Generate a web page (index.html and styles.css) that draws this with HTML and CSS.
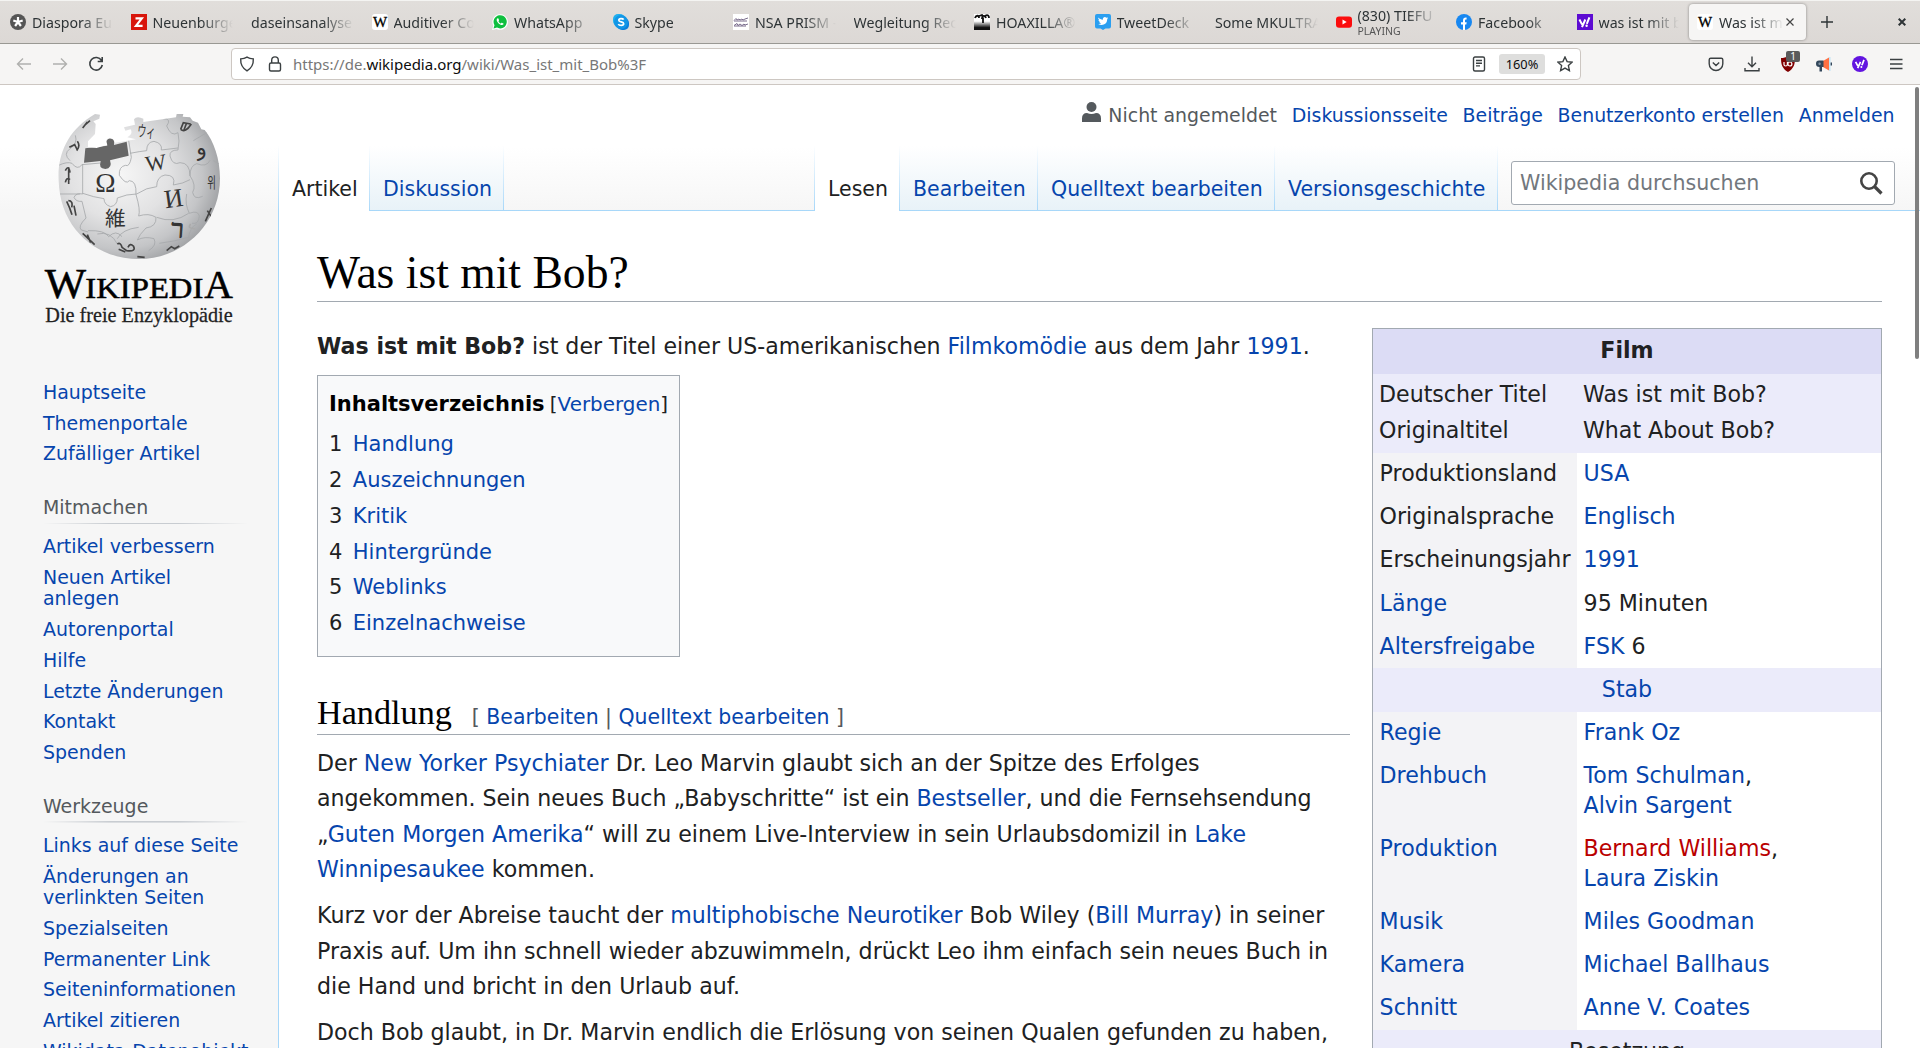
FILE: index.html
```html
<!DOCTYPE html>
<html lang="de">
<head>
<meta charset="utf-8">
<title>Was ist mit Bob? – Wikipedia</title>
<link rel="stylesheet" href="styles.css">
</head>
<body>
<div class="tabbar">
  <div class="tab"><svg class="fav" viewBox="0 0 16 16"><circle cx="8" cy="8" r="8" fill="#555"/><path d="M8 8V3M8 8L3.300 6.500M8 8l4.700-1.500M8 8l-2.900 4M8 8l2.900 4" stroke="#fff" stroke-width="2.200"/></svg><span class="label">Diaspora Eu</span></div>
  <div class="tab"><svg class="fav" viewBox="0 0 16 16"><rect width="16" height="16" fill="#d8150b"/><path d="M4.500 4.400h6.300L5 11.800h6.600" fill="none" stroke="#fff" stroke-width="2.200"/></svg><span class="label">Neuenburge</span></div>
  <div class="tab"><span class="label">daseinsanalyse</span></div>
  <div class="tab"><svg class="fav" viewBox="0 0 16 16"><rect width="16" height="16" rx="3" fill="#fff"/><text x="8" y="13" text-anchor="middle" class="w-icon">W</text></svg><span class="label">Auditiver Co</span></div>
  <div class="tab"><svg class="fav" viewBox="0 0 16 16"><path d="M0 16l1.300-4.200A7.800 7.800 0 1 1 4.600 15z" fill="#fff"/><path d="M1.500 14.500l1-3.300A6.600 6.600 0 1 1 5 13.600z" fill="#0fbf3f"/><path d="M5.600 4.200c-1.600.8-1 3.200.8 5s4 2.600 5.100 1.100c.3-.8-.2-1-1.600-1.600-.7-.2-.8 1-1.400.7C7.500 9 6.800 8 6.500 7.300c-.1-.5.7-.8.5-1.400-.5-1.300-.6-1.800-1.400-1.700z" fill="#fff"/></svg><span class="label">WhatsApp</span></div>
  <div class="tab"><svg class="fav" viewBox="0 0 16 16"><rect x="0" y="0" width="12" height="12" rx="5" fill="#1fb0ee"/><rect x="4" y="4" width="12" height="12" rx="5" fill="#0a7fdc"/><circle cx="8" cy="8" r="7" fill="#1296e6"/><path d="M10.600 5.600C9.800 4.200 5.800 4.100 5.800 6.200c0 2.200 4.900 1.200 4.900 3.500 0 2.200-4.400 2.100-5.400.4" fill="none" stroke="#fff" stroke-width="1.700"/></svg><span class="label">Skype</span></div>
  <div class="tab"><svg class="fav" viewBox="0 0 16 16"><rect width="16" height="16" fill="#fff"/><path d="M1 6.500l2-2 1 1.500 2-1 1 1 2-1 1 1 2-1 3-1M1 7h13M1 11.500l3-2 1 2 2-1.500 2 1.500 2-1.500 1 1 3-1M1 12h12" fill="none" stroke="#6b5c80" stroke-width=".9"/></svg><span class="label">NSA PRISM -</span></div>
  <div class="tab"><span class="label">Wegleitung Rec</span></div>
  <div class="tab"><svg class="fav" viewBox="0 0 16 16"><defs><linearGradient id="hx" x2="0" y2="1"><stop offset=".45" stop-color="#fff"/><stop offset=".85" stop-color="#111"/></linearGradient></defs><rect width="16" height="16" fill="url(#hx)"/><path d="M1 4c1-3 4-3 4 0M5 2l3-1 1 3M9 9V4M8 5c0-4 3-4 4-1M11 2c3-2 4 0 4 2" fill="none" stroke="#111" stroke-width="1.800"/></svg><span class="label">HOAXILLA®</span></div>
  <div class="tab"><svg class="fav" viewBox="0 0 16 16"><path d="M2 0h12q2 0 2 2v10.500q0 2-2 2h-3.500L8 16l-2.500-1.500H2q-2 0-2-2V2Q0 0 2 0z" fill="#2b9ff0"/><path d="M3.300 3.600c1.300 1.400 2.800 2.100 4.600 2.200-.4-2.300 2-3.500 3.400-2.100l1.600-.5-.8 1.300 1.100-.3-1.100 1.300c.2 4.700-4.800 6.700-8.900 4.500 1.300.1 2.300-.2 3-.8-1-.1-1.700-.7-2-1.400h.9c-1-.3-1.600-1.100-1.600-2l.8.200c-.9-.7-1.200-1.500-1-2.400z" fill="#fff"/></svg><span class="label">TweetDeck</span></div>
  <div class="tab"><span class="label">Some MKULTRA</span></div>
  <div class="tab"><svg class="fav" viewBox="0 0 16 16"><rect y="2.500" width="16" height="11.200" rx="3" fill="#fb0d0d"/><path d="M6.500 5.600v5l4.200-2.500z" fill="#fff"/></svg><span class="label playing">(830) TIEFU<small>PLAYING</small></span></div>
  <div class="tab"><svg class="fav" viewBox="0 0 16 16"><circle cx="8" cy="8" r="8" fill="#1787f1"/><path d="M7 16v-5.500H5V8.200h2V6.500c0-2.200 1.300-3.300 3.600-2.900v1.900c-1.300-.1-1.600.3-1.600 1.200v1.500h1.700l-.4 2.300H9V16z" fill="#fff"/></svg><span class="label">Facebook</span></div>
  <div class="tab"><svg class="fav" viewBox="0 0 16 16"><rect width="16" height="16" fill="#5c0bd2"/><path d="M2.400 5.500l2.700 5M8.300 5.500L5 13.200M9.800 9.800l2.600-6.500" stroke="#fff" stroke-width="2" fill="none"/><circle cx="9.600" cy="11.800" r="1.200" fill="#fff"/></svg><span class="label">was ist mit b</span></div>
  <div class="tab active"><svg class="fav" viewBox="0 0 16 16"><rect width="16" height="16" rx="3" fill="#fff"/><text x="8" y="13" text-anchor="middle" class="w-icon">W</text></svg><span class="label">Was ist m</span><svg class="tab-close" viewBox="0 0 8 8"><path d="M.5.5l7 7m0-7l-7 7" stroke="#444" stroke-width="1.200"/></svg></div>
  <svg class="new-tab" viewBox="0 0 12 12"><path d="M6 0v12M0 6h12" stroke="#2e3436" stroke-width="1.400"/></svg>
  <svg class="win-close" viewBox="0 0 8 8"><path d="M.7.700l6.600 6.600m0-6.600L.7 7.300" stroke="#2e3436" stroke-width="2"/></svg>
</div>

<div class="toolbar">
  <div class="nav">
    <svg class="ic dim" viewBox="0 0 16 16"><path d="M15 8H1.500M7 2.500L1.500 8 7 13.500"/></svg>
    <svg class="ic dim" viewBox="0 0 16 16"><path d="M1 8h13.500M9 2.500L14.500 8 9 13.500"/></svg>
    <svg class="ic bold" viewBox="0 0 16 16"><path d="M13.500 4.500A6.300 6.300 0 1 0 14.300 9M14.200 1v4.500H9.700"/></svg>
  </div>
  <div class="urlbar">
    <svg class="ic" viewBox="0 0 16 16"><path d="M8 1.200c2 1.300 4 1.700 6.300 1.700.3 5.300-1.300 9-6.300 12-5-3-6.600-6.700-6.300-12C4 2.900 6 2.500 8 1.200z"/></svg>
    <svg class="ic" viewBox="0 0 16 16"><rect x="2.500" y="7" width="11" height="8" rx="1.500"/><path d="M4.700 7V4.200a3.300 3.300 0 0 1 6.600 0V7"/></svg>
    <span class="url">https://de.<b>wikipedia.org</b>/wiki/Was_ist_mit_Bob%3F</span>
    <svg class="ic reader" viewBox="0 0 16 16"><rect x="2.500" y="1" width="11" height="14" rx="1.500"/><path d="M5 4.500h6M5 7.200h6M5 9.900h4"/></svg>
    <span class="zoom">160%</span>
    <svg class="ic" viewBox="0 0 16 16"><path d="M8 1l2.100 4.600 5 .6-3.700 3.400 1 5L8 12.100 3.600 14.600l1-5L.9 6.200l5-.6z"/></svg>
  </div>
  <div class="ext">
    <svg class="ic" viewBox="0 0 16 16"><path d="M2.700 2.200h10.600q1.500 0 1.500 1.500v4a6.800 6.800 0 0 1-13.600 0v-4q0-1.500 1.500-1.500zM4.800 6.500L8 9.600l3.200-3.100"/></svg>
    <svg class="ic" viewBox="0 0 16 16"><path d="M8 .5v10M4 6.800l4 4 4-4M1 12v2.800h14V12"/></svg>
    <div class="ublock"><svg class="ic fill" viewBox="0 0 16 16"><path d="M8 0c2 1.500 4.500 2 7 2 0 6-1 10.500-7 14C2 12.500 1 8 1 2c2.500 0 5-.5 7-2z" fill="#800000"/><path d="M4 6v2.500Q4 10 5.700 10t1.700-1.500V6" fill="none" stroke="#fff" stroke-width="1.200"/><circle cx="9.900" cy="8" r="2" fill="none" stroke="#fff" stroke-width="1.200"/></svg><span class="count">1</span></div>
    <svg class="ic fill" viewBox="0 0 16 16"><path d="M7 5l6-3.500v13L7 11z" fill="#ff7043"/><path d="M7.500 4.500V11H6v4.500H3.500V11Q0 11 0 7.700 0 4.500 3 4.500z" fill="#33475b"/><path d="M13.800 1v14" stroke="#bfe4f5" stroke-width="1.400"/><path d="M15.300 6.500v3" stroke="#33475b" stroke-width="1.400"/><circle cx="3.600" cy="7.700" r="1.200" fill="#8696a5"/></svg>
    <svg class="ic fill" viewBox="0 0 16 16"><circle cx="8" cy="8" r="8" fill="#6214e0"/><path d="M3.600 5.800l2.200 4.100M8.500 5.800l-2.800 6.400M9.900 9.200L12 3.900" stroke="#fff" stroke-width="1.700" fill="none"/><circle cx="9.400" cy="11" r="1" fill="#fff"/></svg>
    <svg class="ic" viewBox="0 0 16 16"><path d="M2 3.500h12.500M2 8h12.500M2 12.500h12.500"/></svg>
  </div>
</div>

<div class="page">
  <aside class="sidebar">
    <svg class="logo" viewBox="120 60 600 680">
      <defs>
        <radialGradient id="globe" cx=".38" cy=".42" r=".68"><stop offset="0" stop-color="#f6f6f6"/><stop offset=".45" stop-color="#e2e2e3"/><stop offset=".75" stop-color="#c4c5c7"/><stop offset="1" stop-color="#949699"/></radialGradient>
        <clipPath id="ball"><path id="shell" d="M300 92L285 90 272 98C200 145 172 215 176 290 180 430 285 525 417 525S660 420 660 283C660 225 642 172 614 138L604 136 594 116 578 110 570 100 548 98 550 90 530 90 528 100 430 114 430 104Q410 94 402 106L405 122 372 130 376 140 392 136Q400 150 382 160L408 166 345 176 340 166Q322 158 318 172L322 182 290 192 264 190 264 172 285 150 287 120 280 112 298 104z"/></clipPath>
      </defs>
      <use href="#shell" fill="url(#globe)"/>
      <g clip-path="url(#ball)">
        <path d="M256 193l66-8q-8-18 8-22 16 2 12 20l38-10 6 42-56 14q8 24-14 26-22-2-14-24l-50 5z" fill="#666"/>
        <g fill="none" stroke="#a6a8ab" stroke-width="2.500">
          <path d="M176 244q25-12 40-6 16 22 30 4l56-5M386 170l8 50q-5 30-18 24-20 4-18 30 20 30 30 16 22 0 20 42M390 208q30-6 50-8 0-26 22-28 26 6 22 26l50-6M490 104q26 0 10 22 14 34 34 20M534 146q6 24 0 52-26 0-24 18 8 30 30 20 30 0 30 40M410 330q30-20 60-22 0-30 25-35 34 0 25 30 30-4 50-16M570 275q0-30 20-36 30 12 40-10M570 275q20 30 8 50 4 24 30 12M410 330q-30 0-58 12 0 22-20 26-20-6-20-24-30-4-64-16M248 240v90q-20-4-26 10 6 14 24 12l12 50q-26 26-14 36l20 6M180 330l60 0M408 332q14 46 8 64 30-10 52 4 2 28-30 32-20 20-26 36 22-12 50-4 10 20-16 36M560 330q-6 30 8 58 26-10 30 8-2 26-22 22M416 430q-50 6-64 34M470 400q50 20 96-12M264 440q50-2 62 18 22-22 40 0M210 230q-22-20 0-36 24-16 16-40M640 230l18 10M590 420q-20 10-24 40-40 12-88 18M352 480q-20-40-60-30M580 170l50-30"/>
        </g>
        <g class="glyphs">
          <text x="286" y="325" font-size="82" textLength="60">Ω</text>
          <text x="436" y="258" font-size="66" transform="rotate(-8 468 235)">W</text>
          <text x="492" y="369" font-size="78" transform="rotate(-8 520 340)">И</text>
          <text x="315" y="427" font-size="62" class="cjk">維</text>
          <text x="412" y="160" font-size="48" class="cjk" textLength="54" lengthAdjust="spacingAndGlyphs" transform="rotate(6 440 145)">ウィ</text>
          <text x="514" y="460" font-size="76" transform="rotate(4 530 440)" stroke="#333" stroke-width="3">ר</text>
          <text x="588" y="212" font-size="64" transform="rotate(-12 605 200)">و</text>
          <text x="622" y="312" font-size="46" class="cjk" textLength="26" lengthAdjust="spacingAndGlyphs">위</text>
        </g>
        <g fill="none" stroke="#444" stroke-width="5">
          <path d="M248 132l14-18M256 122l14-12M208 190l16-8 8 16M232 172q10 14-2 28M196 260q10-20 14 6M196 295q4-18 14-8M206 250v50M200 352q10 20 16 40M205 350q15 0 10 20M222 365l6 30M248 448l36 34M262 452l10 24M352 480q10-6 14 10l14 10q30 4 20-14-10-10-16 4M356 496l20 8M412 518l22 2M500 500l14-12 10 6 14-8M542 136l8-20 22 4M542 136q14 12 32-16M552 138l8-22M616 412l18-40M622 380l12 18"/>
          <path d="M572 420q-12 14 14 14" stroke="#aaa"/>
        </g>
      </g>
      <g class="wordmark"><text x="134" y="643" font-size="124" textLength="124" lengthAdjust="spacingAndGlyphs">W</text><text x="256" y="643" font-size="88" textLength="354" lengthAdjust="spacingAndGlyphs">IKIPEDI</text><text x="613" y="643" font-size="122" textLength="86" lengthAdjust="spacingAndGlyphs">A</text><text x="136" y="713" font-size="62" textLength="562" lengthAdjust="spacingAndGlyphs" class="claim">Die freie Enzyklopädie</text></g>
    </svg>
    <ul class="menu first"><li>Hauptseite</li><li>Themenportale</li><li>Zufälliger Artikel</li></ul>
    <h3 class="menu-title">Mitmachen</h3>
    <ul class="menu"><li>Artikel verbessern</li><li>Neuen Artikel<br>anlegen</li><li>Autorenportal</li><li>Hilfe</li><li>Letzte Änderungen</li><li>Kontakt</li><li>Spenden</li></ul>
    <h3 class="menu-title">Werkzeuge</h3>
    <ul class="menu"><li>Links auf diese Seite</li><li>Änderungen an<br>verlinkten Seiten</li><li>Spezialseiten</li><li>Permanenter Link</li><li>Seiteninformationen</li><li>Artikel zitieren</li><li>Wikidata-Datenobjekt</li></ul>
  </aside>

  <div class="main">
    <header class="head">
      <div class="personal">
        <svg class="user" viewBox="0 0 19 20"><circle cx="9.500" cy="5" r="5" fill="#54595d"/><path d="M0 20v-3.500Q0 11 5 11q4.500 2 9 0 5 0 5 5.500V20z" fill="#54595d"/></svg>
        <span class="anon">Nicht angemeldet</span><a>Diskussionsseite</a><a>Beiträge</a><a>Benutzerkonto erstellen</a><a>Anmelden</a>
      </div>
      <div class="views">
        <span class="vtab cur w91">Artikel</span><span class="vtab w135">Diskussion</span>
        <span class="gap"></span>
        <span class="vtab cur w84">Lesen</span><span class="vtab w138">Bearbeiten</span><span class="vtab w237">Quelltext bearbeiten</span><span class="vtab w223">Versionsgeschichte</span>
        <div class="search-area"><div class="search"><span>Wikipedia durchsuchen</span><svg viewBox="0 0 24 24"><circle cx="10" cy="10" r="7.700" fill="none" stroke="#444" stroke-width="2.600"/><path d="M15.500 15.500l7 7" stroke="#444" stroke-width="3.200"/></svg></div></div>
      </div>
    </header>
    <main class="content">
      <h1>Was ist mit Bob?</h1>
      <div class="columns">
        <article>
          <p class="intro"><b>Was ist mit Bob?</b> ist der Titel einer US-amerikanischen <a>Filmkomödie</a> aus dem Jahr <a>1991</a>.</p>
          <nav class="toc">
            <div class="toc-title"><b>Inhaltsverzeichnis</b> <span>[<a>Verbergen</a>]</span></div>
            <ol><li><i>1</i><a>Handlung</a></li><li><i>2</i><a>Auszeichnungen</a></li><li><i>3</i><a>Kritik</a></li><li><i>4</i><a>Hintergründe</a></li><li><i>5</i><a>Weblinks</a></li><li><i>6</i><a>Einzelnachweise</a></li></ol>
          </nav>
          <h2>Handlung<span class="edit">[ <a>Bearbeiten</a> | <a>Quelltext bearbeiten</a> ]</span></h2>
          <p>Der <a>New Yorker</a> <a>Psychiater</a> Dr. Leo Marvin glaubt sich an der Spitze des Erfolges<br>angekommen. Sein neues Buch „Babyschritte“ ist ein <a>Bestseller</a>, und die Fernsehsendung<br>„<a>Guten Morgen Amerika</a>“ will zu einem Live-Interview in sein Urlaubsdomizil in <a>Lake</a><br><a>Winnipesaukee</a> kommen.</p>
          <p>Kurz vor der Abreise taucht der <a>multiphobische</a> <a>Neurotiker</a> Bob Wiley (<a>Bill Murray</a>) in seiner<br>Praxis auf. Um ihn schnell wieder abzuwimmeln, drückt Leo ihm einfach sein neues Buch in<br>die Hand und bricht in den Urlaub auf.</p>
          <p>Doch Bob glaubt, in Dr. Marvin endlich die Erlösung von seinen Qualen gefunden zu haben,</p>
        </article>
        <div class="infobox">
          <div class="film">Film</div>
          <div class="titles"><span>Deutscher Titel</span><span>Was ist mit Bob?</span><span>Originaltitel</span><span>What About Bob?</span></div>
          <div class="row"><span>Produktionsland</span><span><a>USA</a></span></div>
          <div class="row"><span>Originalsprache</span><span><a>Englisch</a></span></div>
          <div class="row"><span>Erscheinungsjahr</span><span><a>1991</a></span></div>
          <div class="row"><span><a>Länge</a></span><span>95 Minuten</span></div>
          <div class="row"><span><a>Altersfreigabe</a></span><span><a>FSK</a> 6</span></div>
          <div class="section"><a>Stab</a></div>
          <div class="row"><span><a>Regie</a></span><span><a>Frank Oz</a></span></div>
          <div class="row"><span><a>Drehbuch</a></span><span><a>Tom Schulman</a>,<br><a>Alvin Sargent</a></span></div>
          <div class="row"><span><a>Produktion</a></span><span><a class="new">Bernard Williams</a>,<br><a>Laura Ziskin</a></span></div>
          <div class="row"><span><a>Musik</a></span><span><a>Miles Goodman</a></span></div>
          <div class="row"><span><a>Kamera</a></span><span><a>Michael Ballhaus</a></span></div>
          <div class="row"><span><a>Schnitt</a></span><span><a>Anne V. Coates</a></span></div>
          <div class="section">Besetzung</div>
        </div>
      </div>
    </main>
  </div>
  <div class="scrollbar"></div>
</div>
</body>
</html>
```
FILE: styles.css
```css
* { box-sizing: border-box; }
html, body { margin: 0; height: 1048px; overflow: hidden; }
body { width: 1920px; font-family: "DejaVu Sans", sans-serif; color: #202122; background: #fff; display: flex; flex-direction: column; }
a { color: #0645ad; }
ul, ol { list-style: none; margin: 0; padding: 0; }
svg { display: block; flex: none; }

/* browser chrome */
.tabbar { height: 44px; flex: none; background: linear-gradient(#e1dedb, #dcd8d5); border-top: 1px solid #f4f4f2; border-bottom: 1px solid #999893; display: flex; align-items: center; padding-left: 2px; font: 14.200px "Noto Sans", sans-serif; color: #2e3436; }
.tab { width: 120.500px; height: 36px; flex: none; display: flex; align-items: center; padding: 0 10px 0 8px; }
.fav { width: 16px; height: 16px; margin-right: 6px; }
.w-icon { font: 15px "Liberation Serif", serif; stroke: #000; stroke-width: .3px; }
.label { flex: 1; min-width: 0; white-space: nowrap; overflow: hidden; line-height: 20px; padding-top: 1px; -webkit-mask-image: linear-gradient(90deg, #000 calc(100% - 32px), transparent); mask-image: linear-gradient(90deg, #000 calc(100% - 32px), transparent); }
.playing { line-height: 18px; padding-top: 0; }
.playing small { display: block; font-size: 10.500px; line-height: 13px; color: #555; }
.tab.active { width: 117px; background: #f6f5f4; border-radius: 4px; box-shadow: 0 0 3px rgba(0,0,0,.4); padding-right: 12px; }
.tab.active .label { margin-right: 2px; }
.tab-close { width: 8px; height: 8px; }
.new-tab { width: 12px; height: 12px; margin-left: 15px; }
.win-close { width: 8px; height: 8px; margin-left: auto; margin-right: 14px; }

.toolbar { height: 41px; flex: none; background: #f6f5f4; border-bottom: 1px solid #cdc7c2; display: flex; align-items: center; font: 15px "Noto Sans", sans-serif; }
.ic { width: 16px; height: 16px; fill: none; stroke: #3b4042; stroke-width: 1.400; }
.ic.fill { stroke: none; }
.ic.dim { stroke: #b0b0ae; }
.ic.bold { stroke-width: 1.600; }
.nav { width: 231px; padding-left: 16px; display: flex; gap: 20px; }
.urlbar { width: 1350px; height: 32px; background: #fff; border: 1px solid #cdc7c2; border-radius: 4px; display: flex; align-items: center; padding: 0 7px; }
.urlbar .ic + .ic { margin-left: 12px; }
.url { margin-left: 10px; flex: 1; color: #777; }
.url b { font-weight: normal; color: #0c0c0d; }
.zoom { width: 46px; height: 20px; line-height: 21px; margin: 0 12px; background: #dededd; border-radius: 3px; text-align: center; font-size: 12.800px; color: #0c0c0d; }
.ext { margin-left: auto; margin-right: 16px; display: flex; gap: 20px; }
.ublock { position: relative; }
.count { position: absolute; left: 6px; top: -5px; width: 14px; height: 11px; background: #5b5b5b; border-radius: 2px; color: #fff; font-size: 10px; line-height: 11px; text-align: center; }

/* page frame */
.page { flex: 1; position: relative; overflow: hidden; display: flex; background: linear-gradient(#fff 62px, #f6f6f6 126px); }
.scrollbar { position: absolute; left: 1915px; top: 2px; width: 4px; height: 272px; background: #7f7f7f; border-radius: 2px; }

.sidebar { width: 278px; flex: none; font-size: 18.950px; line-height: 21.350px; }
.logo { width: 200px; height: 226.667px; margin: 19px 0 0 40px; }
.glyphs { font-family: "Liberation Serif", "DejaVu Sans", serif; fill: #333; }
.cjk { font-family: "Noto Sans CJK JP", "Noto Sans CJK KR", sans-serif; }
.wordmark { font-family: "Liberation Serif", serif; stroke: #000; stroke-width: 1.500px; }
.claim { fill: #222; stroke: #222; stroke-width: .8px; }
.menu { padding-left: 43px; color: #0645ad; white-space: nowrap; }
.menu li { padding-bottom: 9.450px; }
.menu.first { margin-top: 51.200px; }
.menu-title { margin: 18px 30px 12px 43px; height: 32px; font-size: 18.950px; line-height: 30.500px; font-weight: normal; color: #54595d; background: linear-gradient(90deg, transparent, #c8ccd1 33%, #c8ccd1 66%, transparent) bottom / 100% 1.600px no-repeat; }

.main { flex: 1; display: flex; flex-direction: column; }
.head { height: 126px; flex: none; display: flex; flex-direction: column; }
.personal { height: 61px; padding: 14px 25.500px 0 0; display: flex; justify-content: flex-end; gap: 14.800px; font-size: 18.900px; line-height: 32px; }
.user { width: 19px; height: 20px; margin: 3px -7px 0 0; }
.anon { color: #54595d; }
.views { flex: 1; display: flex; font-size: 20.500px; color: #202122; }
.vtab { flex: none; padding: 31px 0 0 13px; line-height: 24px; white-space: nowrap; color: #0645ad; border-right: 1px solid; border-bottom: 1px solid #a7d7f9; border-image: linear-gradient(#fff, #a7d7f9) 1; background: linear-gradient(#fff, #e8f2f8); }
.vtab.cur { color: #202122; background: #fff; border-bottom: 0; }
.cur.w91 { border-left: 1px solid; }
.w91 { width: 92px; } .w135 { width: 134px; } .w84 { width: 85px; } .w138 { width: 138px; } .w237 { width: 237px; } .w223 { width: 223px; }
.gap { flex: 1; border-right: 1px solid; border-bottom: 1px solid; border-image: linear-gradient(#fff, #a7d7f9) 1; }
.search-area { width: 422px; border-bottom: 1px solid #a7d7f9; padding: 15px 25px 0 13px; }
.search { height: 44px; padding: 0 11px 0 8px; display: flex; align-items: center; justify-content: space-between; border: 1px solid #a2a9b1; border-radius: 3px; background: rgba(255,255,255,.9); color: #72777d; font-size: 20.600px; }
.search svg { width: 24px; height: 24px; }

/* article */
.content { flex: 1; background: #fff; border-left: 1px solid #a7d7f9; padding: 35px 38px 0; font-size: 22.110px; line-height: 35.400px; }
h1 { margin: 0; height: 56px; border-bottom: 1px solid #a2a9b1; font: 45.600px/54px "Liberation Serif", serif; color: #000; white-space: nowrap; }
.columns { display: flex; justify-content: space-between; align-items: flex-start; }
article { width: 1033px; padding-top: 27px; white-space: nowrap; }
p { margin: 0 0 10.700px; }
.intro { height: 36px; margin-bottom: 10px; }
.toc { width: 363px; height: 282px; margin-bottom: 32px; padding: 11px 11px; background: #f8f9fa; border: 1px solid #a2a9b1; font-size: 21px; line-height: 35.840px; }
.toc-title b { color: #000; }
.toc-title { display: flex; align-items: baseline; justify-content: space-between; margin-bottom: 4.200px; }
.toc-title span { font-size: 19.900px; }
.toc li { display: flex; gap: 10.400px; }
.toc i { font-style: normal; }
h2 { margin: 0 0 11px; height: 46px; border-bottom: 1px solid #a2a9b1; font: 34.200px/47px "Liberation Serif", serif; color: #000; }
.edit { margin-left: 20px; font: 20.450px "DejaVu Sans", sans-serif; color: #54595d; }

.infobox { width: 510px; margin-top: 26px; border: 1px solid #a2a9b1; line-height: 30px; white-space: nowrap; }
.film { height: 45px; line-height: 43px; background: #dcdcf5; text-align: center; font-weight: bold; }
.titles { height: 79px; padding: 5px 6px; background: #ebebfa; display: grid; grid-template-columns: 204px 1fr; grid-auto-rows: 36px; }
.row { display: grid; grid-template-columns: 204px 1fr; line-height: 30px; }
.row span { padding: 5.300px 6.600px 7.800px; }
.row span:first-child { background: #f3f3f6; }
.section { height: 43.100px; line-height: 42.500px; background: #ebebfa; text-align: center; }
a.new { color: #ba0000; }
```
